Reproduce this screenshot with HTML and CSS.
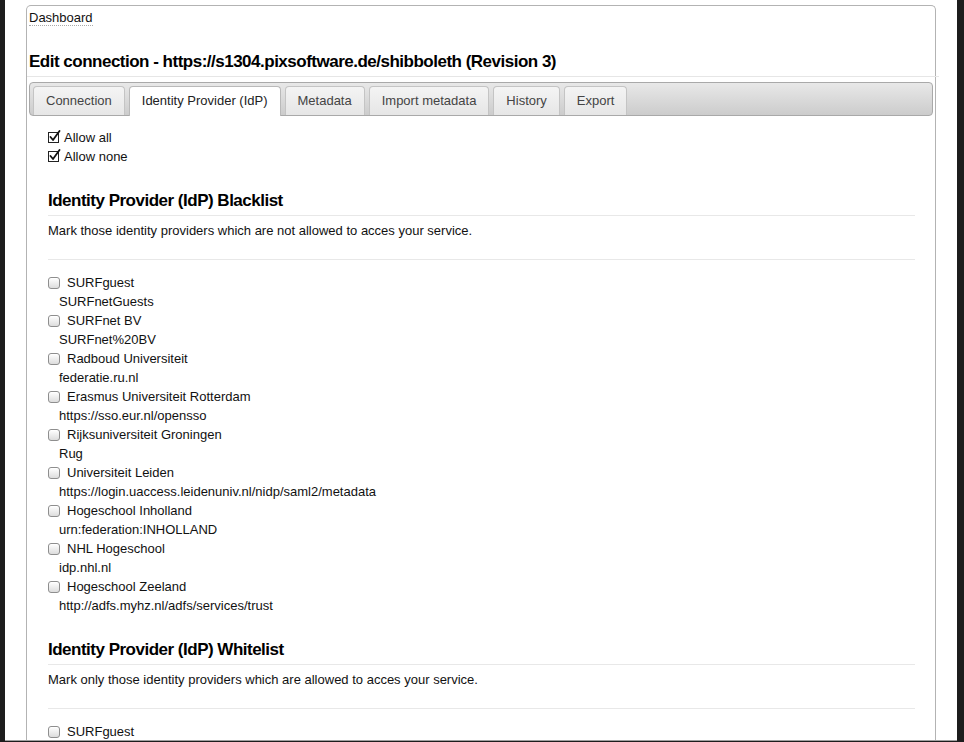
FILE: index.html
```html
<!DOCTYPE html>
<html>
<head>
<meta charset="utf-8">
<title>Edit connection</title>
<link rel="stylesheet" href="styles.css">
</head>
<body>
<div class="frame">
  <div class="box">
    <div class="crumbs"><a class="crumb" href="#">Dashboard</a></div>
    <h1 class="title">Edit connection - https://s1304.pixsoftware.de/shibboleth (Revision 3)</h1>
    <div class="tabbar">
      <a class="tab" href="#">Connection</a>
      <a class="tab active" href="#">Identity Provider (IdP)</a>
      <a class="tab" href="#">Metadata</a>
      <a class="tab" href="#">Import metadata</a>
      <a class="tab" href="#">History</a>
      <a class="tab" href="#">Export</a>
    </div>
    <div class="panel">
      <div class="allow">
        <label class="check-row"><svg class="checked" width="13" height="13" viewBox="0 0 13 13"><rect x="0.5" y="2.5" width="10" height="10" fill="#fff" stroke="#222" stroke-width="1"/><path d="M2.5 7 L5 10 L11.5 1" fill="none" stroke="#111" stroke-width="1.8" stroke-linecap="round" stroke-linejoin="round"/></svg>Allow all</label>
        <label class="check-row"><svg class="checked" width="13" height="13" viewBox="0 0 13 13"><rect x="0.5" y="2.5" width="10" height="10" fill="#fff" stroke="#222" stroke-width="1"/><path d="M2.5 7 L5 10 L11.5 1" fill="none" stroke="#111" stroke-width="1.8" stroke-linecap="round" stroke-linejoin="round"/></svg>Allow none</label>
      </div>

      <h2 class="section-title">Identity Provider (IdP) Blacklist</h2>
      <p class="section-text">Mark those identity providers which are not allowed to acces your service.</p>
      <div class="list">
        <div class="idp"><label class="idp-name"><span class="cb"></span>SURFguest</label><div class="idp-id">SURFnetGuests</div></div>
        <div class="idp"><label class="idp-name"><span class="cb"></span>SURFnet BV</label><div class="idp-id">SURFnet%20BV</div></div>
        <div class="idp"><label class="idp-name"><span class="cb"></span>Radboud Universiteit</label><div class="idp-id">federatie.ru.nl</div></div>
        <div class="idp"><label class="idp-name"><span class="cb"></span>Erasmus Universiteit Rotterdam</label><div class="idp-id">https://sso.eur.nl/opensso</div></div>
        <div class="idp"><label class="idp-name"><span class="cb"></span>Rijksuniversiteit Groningen</label><div class="idp-id">Rug</div></div>
        <div class="idp"><label class="idp-name"><span class="cb"></span>Universiteit Leiden</label><div class="idp-id">https://login.uaccess.leidenuniv.nl/nidp/saml2/metadata</div></div>
        <div class="idp"><label class="idp-name"><span class="cb"></span>Hogeschool Inholland</label><div class="idp-id">urn:federation:INHOLLAND</div></div>
        <div class="idp"><label class="idp-name"><span class="cb"></span>NHL Hogeschool</label><div class="idp-id">idp.nhl.nl</div></div>
        <div class="idp"><label class="idp-name"><span class="cb"></span>Hogeschool Zeeland</label><div class="idp-id">http://adfs.myhz.nl/adfs/services/trust</div></div>
      </div>

      <h2 class="section-title">Identity Provider (IdP) Whitelist</h2>
      <p class="section-text">Mark only those identity providers which are allowed to acces your service.</p>
      <div class="list">
        <div class="idp"><label class="idp-name"><span class="cb"></span>SURFguest</label></div>
      </div>
    </div>
  </div>
</div>
</body>
</html>
```

FILE: styles.css
```css
html {
  background: #1d1d1d;
}
body {
  margin: 0;
  font-family: "Liberation Sans", Arial, sans-serif;
  font-size: 13px;
  color: #111;
}
.frame {
  margin: 0 7px 0 5px;
  height: 741px;
  background: #fff;
  overflow: hidden;
  border-bottom: 1px solid #a0a0a0;
  padding-top: 5px;
  box-sizing: border-box;
}
.box {
  margin-left: 21px;
  width: 910px;
  box-sizing: border-box;
  border: 1px solid #b3b3b3;
  border-bottom: none;
  border-radius: 5px 5px 0 0;
  min-height: 800px;
}
.crumbs {
  padding: 4px 0 0 2px;
  line-height: 15px;
}
.crumb {
  display: inline-block;
  color: #111;
  text-decoration: none;
  border-bottom: 1px dotted #aaa;
}
.title {
  margin: 25px -4px 0 0;
  padding: 0 0 3px 2px;
  font-size: 17px;
  line-height: 22px;
  font-weight: bold;
  letter-spacing: -0.5px;
  color: #000;
  border-bottom: 1px solid #e6e6e6;
}
.tabbar {
  margin: 5px 2px 0 2px;
  height: 34px;
  box-sizing: border-box;
  border: 1px solid #a9a9a9;
  border-radius: 4px;
  background: linear-gradient(#e8e8e8, #cccccc);
  padding: 3px 0 0 3px;
  display: flex;
  gap: 4px;
  align-items: stretch;
}
.tab {
  display: flex;
  align-items: center;
  padding: 0 12px 2px;
  height: 29px;
  box-sizing: border-box;
  border: 1px solid #c4c4c4;
  border-bottom: none;
  border-radius: 4px 4px 0 0;
  background: linear-gradient(#f4f4f4, #e6e6e6);
  color: #444;
  text-decoration: none;
}
.tab.active {
  background: #fff;
  height: 30px;
  padding-bottom: 3px;
  margin-bottom: -1px;
  color: #222;
  border-color: #b9b9b9;
}
.panel {
  padding: 12px 20px 0 21px;
}
.check-row {
  display: flex;
  align-items: center;
  line-height: 19px;
}
.checked {
  margin: 0 3px 2px 0;
}
.section-title {
  margin: 24px 0 0 0;
  padding: 0 0 3px 0;
  font-size: 17px;
  line-height: 22px;
  font-weight: bold;
  letter-spacing: -0.5px;
  color: #000;
  border-bottom: 1px solid #e8e8e8;
}
.section-text {
  margin: 5px 0 0 0;
  line-height: 19px;
  padding-bottom: 19px;
  border-bottom: 1px solid #e8e8e8;
  color: #111;
}
.list {
  padding-top: 13px;
}
.idp-name {
  display: flex;
  align-items: center;
  line-height: 19px;
}
.cb {
  width: 12px;
  height: 12px;
  box-sizing: border-box;
  border: 1px solid #8e8e8e;
  border-radius: 3px;
  background: linear-gradient(#ffffff, #dcdcdc);
  margin: 0 7px 0 0;
  box-shadow: inset 0 1px 0 #fff;
}
.idp-id {
  padding-left: 11px;
  line-height: 19px;
}
```
